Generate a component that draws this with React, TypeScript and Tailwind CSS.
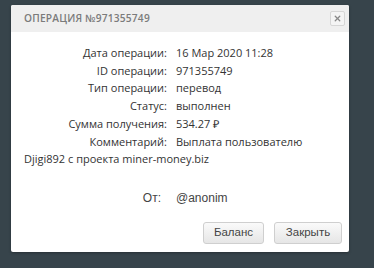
import { X } from 'lucide-react';

const rows: [string, string][] = [
  ['Дата операции:', '16 Мар 2020 11:28'],
  ['ID операции:', '971355749'],
  ['Тип операции:', 'перевод'],
  ['Статус:', 'выполнен'],
  ['Сумма получения:', '534.27 ₽'],
];

const App = () => {
  return (
    <div className="w-[374px] h-[268px] bg-[#37444b] pt-[5px] pl-[11px] overflow-hidden">
      <div className="w-[338px] bg-white rounded-[2px] shadow-[0_1px_3px_rgba(0,0,0,0.3)] overflow-hidden">
        {/* Header */}
        <div className="h-[27px] bg-[#efefef] flex items-center justify-between pl-[13px] pr-[4px]">
          <h3 className="font-['Open_Sans',sans-serif] font-semibold text-[10.2px] tracking-[0.2px] text-[#7b7b7b] uppercase">
            Операция №971355749
          </h3>
          <button className="w-[15px] h-[15px] border border-[#d6d6d6] bg-[#f4f4f4] rounded-[2px] flex items-center justify-center text-[#888]">
            <X size={9} strokeWidth={3.5} />
          </button>
        </div>

        {/* Body */}
        <div className="px-[13px] pt-[12px] font-['Open_Sans',sans-serif] text-[11px] leading-[17.7px] text-[#333]">
          {rows.map(([label, value]) => (
            <div key={label}>
              <span className="inline-block w-[152px] text-right pr-[9px]">{label}</span>
              {value}
            </div>
          ))}
          <p>
            <span className="inline-block w-[152px] text-right pr-[9px]">Комментарий:</span>
            Выплата пользователю Djigi892 с проекта miner-money.biz
          </p>
        </div>

        <div className="mt-[21px] pl-[13px] font-['Liberation_Sans',sans-serif] text-[12px] text-[#444] flex">
          <span className="w-[137px] text-right">От:</span>
          <span className="ml-[15px]">@anonim</span>
        </div>

        {/* Footer */}
        <div className="flex justify-end gap-[10px] pr-[7px] pt-[15px] pb-[8px] font-['Liberation_Sans',sans-serif] text-[11.5px] text-[#444]">
          <button className="w-[61px] h-[22px] border border-[#cfcfcf] rounded-[3px] bg-gradient-to-b from-[#fafafa] to-[#e6e6e6]">
            Баланс
          </button>
          <button className="w-[68px] h-[22px] border border-[#cfcfcf] rounded-[3px] bg-gradient-to-b from-[#fafafa] to-[#e6e6e6]">
            Закрыть
          </button>
        </div>
      </div>
    </div>
  );
};

export default App;
